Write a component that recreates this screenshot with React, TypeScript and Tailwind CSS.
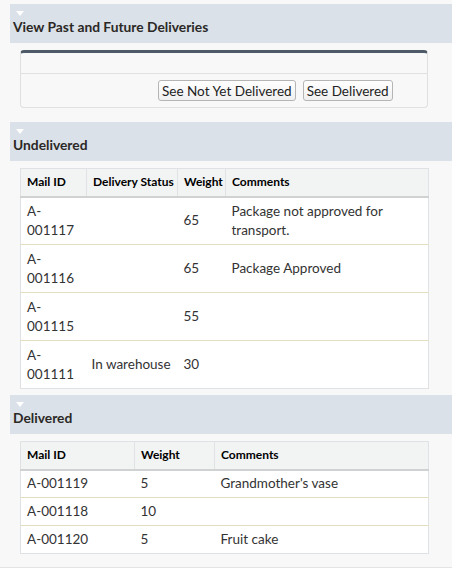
const font = { fontFamily: "Lato, 'Open Sans', Arial, sans-serif" };

function SectionHeader({ title }: { title: string }) {
  return (
    <div className="bg-[#dae1e8] h-[39px] pl-[3px] pt-[7px]">
      <div className="w-0 h-0 border-l-[4px] border-r-[4px] border-t-[5px] border-l-transparent border-r-transparent border-t-white ml-[3px]" />
      <div className="text-[13.8px] font-bold text-[#2b2826] leading-[16px] mt-[3px]">{title}</div>
    </div>
  );
}

function Table({
  cols,
  widths,
  rows,
  twoLine,
  noWrapCol,
}: {
  cols: string[];
  widths: string[];
  rows: string[][];
  twoLine?: boolean;
  noWrapCol?: number;
}) {
  return (
    <table className="w-[408px] border border-[#dfe2e4] border-collapse bg-white table-fixed">
      <colgroup>
        {widths.map((w, i) => (
          <col key={i} style={{ width: w }} />
        ))}
      </colgroup>
      <thead>
        <tr className="bg-[#f2f3f3] h-[28px]">
          {cols.map((c, i) => (
            <th
              key={i}
              className="text-left text-[12px] font-bold text-black px-[6px] border-r border-[#e0e3e5] border-b-2 border-b-[#cfd1d2] whitespace-nowrap"
            >
              {c}
            </th>
          ))}
        </tr>
      </thead>
      <tbody>
        {rows.map((r, i) => (
          <tr key={i} className={i < rows.length - 1 ? "border-b border-[#e3dec0]" : ""}>
            {r.map((c, j) => (
              <td
                key={j}
                className={`text-[13.5px] text-[#333] leading-[19px] px-[6px] align-middle ${twoLine ? "h-[48px]" : "h-[28px]"} ${j === noWrapCol ? "whitespace-nowrap pl-[5px] pr-0" : ""}`}
              >
                {c}
              </td>
            ))}
          </tr>
        ))}
      </tbody>
    </table>
  );
}

export default function App() {
  return (
    <div style={font} className="bg-white min-h-[588px]">
      <div className="bg-[#f8f8f8] pl-[10px] pt-[4px] pb-[13px] border-b border-[#e4e4e4]">
        <SectionHeader title="View Past and Future Deliveries" />
        <div className="ml-[10px] mt-[7px] w-[408px] rounded-[4px] border border-[#e0e0e0] border-t-[3px] border-t-[#4f5a69]">
          <div className="h-[21px] border-b border-[#e0e0e0]" />
          <div className="h-[33px] flex items-center pl-[137px] gap-[7px]">
            <button className="h-[21px] px-[3px] text-[13.5px] text-[#222] border border-[#b5b5b5] rounded-[3px] bg-gradient-to-b from-white to-[#f0f0f0]">
              See Not Yet Delivered
            </button>
            <button className="h-[21px] px-[3px] text-[13.5px] text-[#222] border border-[#b5b5b5] rounded-[3px] bg-gradient-to-b from-white to-[#f0f0f0]">
              See Delivered
            </button>
          </div>
        </div>

        <div className="mt-[14px]">
          <SectionHeader title="Undelivered" />
        </div>
        <div className="ml-[10px] mt-[7px]">
          <Table
            twoLine
            noWrapCol={1}
            cols={["Mail ID", "Delivery Status", "Weight", "Comments"]}
            widths={["66px", "91px", "48px", "203px"]}
            rows={[
              ["A-001117", "", "65", "Package not approved for transport."],
              ["A-001116", "", "65", "Package Approved"],
              ["A-001115", "", "55", ""],
              ["A-001111", "In warehouse", "30", ""],
            ]}
          />
        </div>

        <div className="mt-[6px]">
          <SectionHeader title="Delivered" />
        </div>
        <div className="ml-[10px] mt-[7px]">
          <Table
            cols={["Mail ID", "Weight", "Comments"]}
            widths={["114px", "80px", "214px"]}
            rows={[
              ["A-001119", "5", "Grandmother's vase"],
              ["A-001118", "10", ""],
              ["A-001120", "5", "Fruit cake"],
            ]}
          />
        </div>
      </div>
    </div>
  );
}
